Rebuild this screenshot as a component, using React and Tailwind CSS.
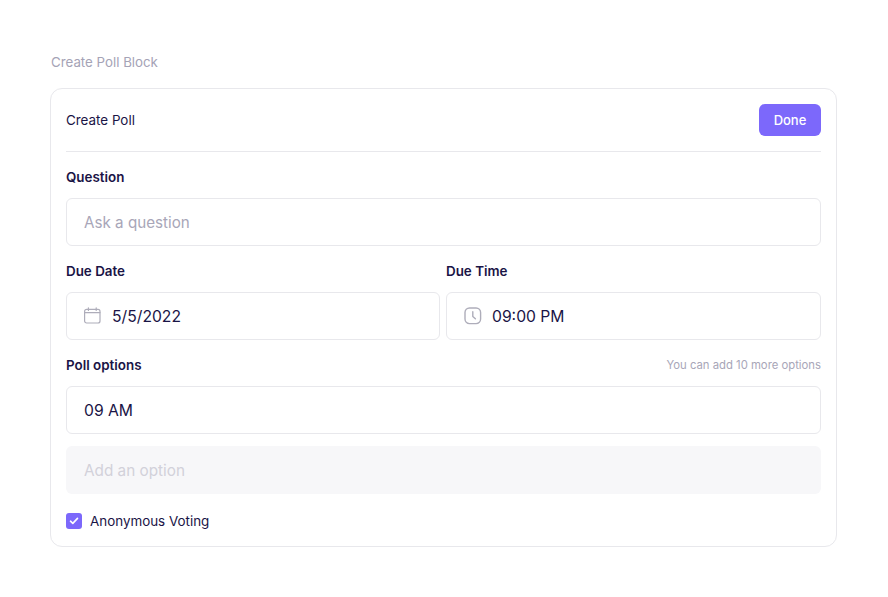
const navy = 'text-[#1a1446]';

function Label({ children }) {
  return <div className={`text-[13.4px] font-semibold leading-[20px] ${navy}`}>{children}</div>;
}

function CalendarIcon() {
  return (
    <svg width="18" height="18" viewBox="0 0 18 18" fill="none" stroke="#aeadba" strokeWidth="1.2">
      <rect x="0.6" y="2.4" width="15.4" height="13.6" rx="2" />
      <path d="M0.6 5.6h15.4M4.4 0.8v2.6M12.2 0.8v2.6" strokeLinecap="round" />
    </svg>
  );
}

function ClockIcon() {
  return (
    <svg width="18" height="18" viewBox="0 0 18 18" fill="none" stroke="#aeadba" strokeWidth="1.4">
      <rect x="1" y="1" width="15.6" height="15.6" rx="4.5" />
      <path d="M8.8 4.8v4.6l2.6 2.4" strokeLinecap="round" strokeLinejoin="round" />
    </svg>
  );
}

function Field({ icon, value, placeholder }) {
  return (
    <div className="flex h-12 items-center gap-[10px] rounded-md border border-[#e8e8ec] bg-white px-[17px]">
      {icon}
      {value ? (
        <span className={`pt-[2px] text-[15.7px] ${navy}`}>{value}</span>
      ) : (
        <span className="pt-[3px] text-[15.2px] text-[#a8a6b8]">{placeholder}</span>
      )}
    </div>
  );
}

export default function App() {
  return (
    <div className="min-h-screen bg-white px-[50px] pt-[53px] font-['Inter',sans-serif]">
      <div className="mb-[17px] pl-px pt-px text-[13.3px] leading-[17px] text-[#a5a3b6]">Create Poll Block</div>
      <div className="w-[787px] rounded-xl border border-[#e8e8ec] px-[15px] pb-[17px]">
        <div className="flex h-[63px] items-center justify-between border-b border-[#e8e8ec]">
          <div className={`text-[13.4px] ${navy}`}>Create Poll</div>
          <button className="h-8 w-[62px] rounded-md bg-[#7c68fb] pt-[2px] text-[13px] font-medium text-white">Done</button>
        </div>

        <div className="mt-[15px]">
          <Label>Question</Label>
          <div className="mt-[11px]">
            <Field placeholder="Ask a question" />
          </div>
        </div>

        <div className="mt-[15px] grid grid-cols-[374px_1fr] gap-[6px]">
          <div>
            <Label>Due Date</Label>
            <div className="mt-[11px]">
              <Field icon={<CalendarIcon />} value="5/5/2022" />
            </div>
          </div>
          <div>
            <Label>Due Time</Label>
            <div className="mt-[11px]">
              <Field icon={<ClockIcon />} value="09:00 PM" />
            </div>
          </div>
        </div>

        <div className="mt-[15px] flex items-center justify-between">
          <Label>Poll options</Label>
          <div className="text-[11.3px] text-[#a8a6b8]">You can add 10 more options</div>
        </div>
        <div className="mt-[11px]">
          <Field value="09 AM" />
        </div>
        <div className="mt-3 flex h-12 items-center rounded-md bg-[#f7f7f9] px-[18px] pt-[3px] text-[15.3px] text-[#d2d1da]">Add an option</div>

        <div className="mt-[19px] flex items-center gap-2">
          <div className="flex h-4 w-4 items-center justify-center rounded-[3px] bg-[#7c68fb]">
            <svg width="10" height="8" viewBox="0 0 10 8" fill="none" stroke="#fff" strokeWidth="1.6" strokeLinecap="round" strokeLinejoin="round">
              <path d="M1.5 4.2l2.3 2.2 4.7-5" />
            </svg>
          </div>
          <span className={`text-[13.4px] leading-4 ${navy}`}>Anonymous Voting</span>
        </div>
      </div>
    </div>
  );
}
